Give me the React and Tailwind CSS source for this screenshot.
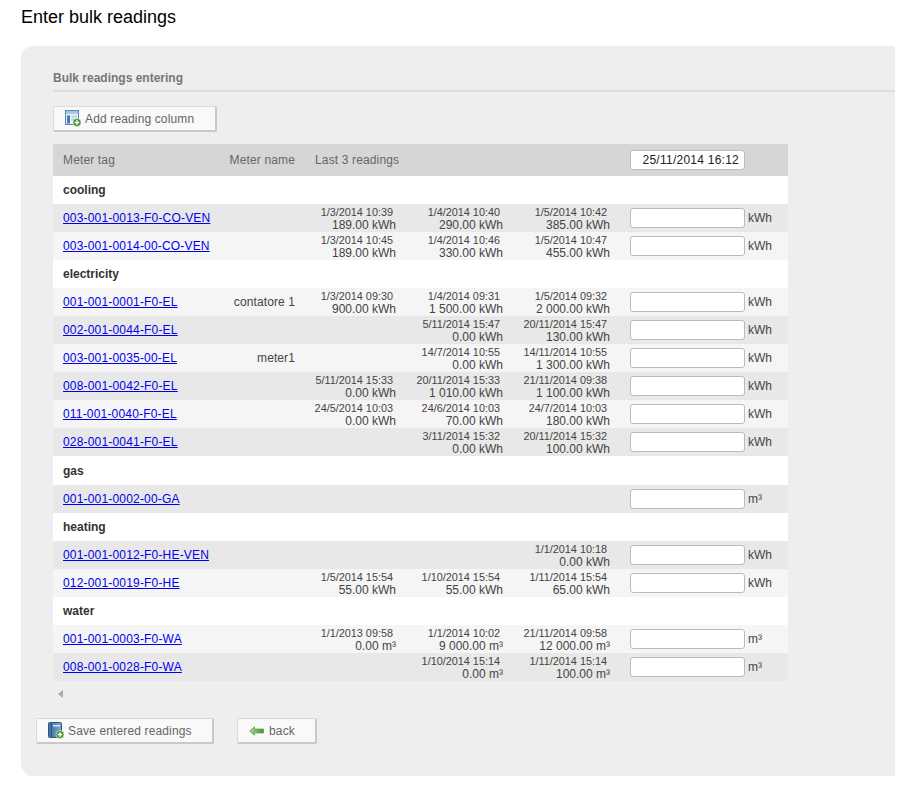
const groups = [
  {
    name: "cooling",
    rows: [
      { tag: "003-001-0013-F0-CO-VEN", unit: "kWh", readings: [["1/3/2014 10:39", "189.00 kWh"], ["1/4/2014 10:40", "290.00 kWh"], ["1/5/2014 10:42", "385.00 kWh"]] },
      { tag: "003-001-0014-00-CO-VEN", unit: "kWh", readings: [["1/3/2014 10:45", "189.00 kWh"], ["1/4/2014 10:46", "330.00 kWh"], ["1/5/2014 10:47", "455.00 kWh"]] },
    ],
  },
  {
    name: "electricity",
    rows: [
      { tag: "001-001-0001-F0-EL", meter: "contatore 1", unit: "kWh", readings: [["1/3/2014 09:30", "900.00 kWh"], ["1/4/2014 09:31", "1 500.00 kWh"], ["1/5/2014 09:32", "2 000.00 kWh"]] },
      { tag: "002-001-0044-F0-EL", unit: "kWh", readings: [null, ["5/11/2014 15:47", "0.00 kWh"], ["20/11/2014 15:47", "130.00 kWh"]] },
      { tag: "003-001-0035-00-EL", meter: "meter1", unit: "kWh", readings: [null, ["14/7/2014 10:55", "0.00 kWh"], ["14/11/2014 10:55", "1 300.00 kWh"]] },
      { tag: "008-001-0042-F0-EL", unit: "kWh", readings: [["5/11/2014 15:33", "0.00 kWh"], ["20/11/2014 15:33", "1 010.00 kWh"], ["21/11/2014 09:38", "1 100.00 kWh"]] },
      { tag: "011-001-0040-F0-EL", unit: "kWh", readings: [["24/5/2014 10:03", "0.00 kWh"], ["24/6/2014 10:03", "70.00 kWh"], ["24/7/2014 10:03", "180.00 kWh"]] },
      { tag: "028-001-0041-F0-EL", unit: "kWh", readings: [null, ["3/11/2014 15:32", "0.00 kWh"], ["20/11/2014 15:32", "100.00 kWh"]] },
    ],
  },
  {
    name: "gas",
    tall: true,
    rows: [{ tag: "001-001-0002-00-GA", unit: "m³", readings: [null, null, null] }],
  },
  {
    name: "heating",
    rows: [
      { tag: "001-001-0012-F0-HE-VEN", unit: "kWh", readings: [null, null, ["1/1/2014 10:18", "0.00 kWh"]] },
      { tag: "012-001-0019-F0-HE", unit: "kWh", readings: [["1/5/2014 15:54", "55.00 kWh"], ["1/10/2014 15:54", "55.00 kWh"], ["1/11/2014 15:54", "65.00 kWh"]] },
    ],
  },
  {
    name: "water",
    rows: [
      { tag: "001-001-0003-F0-WA", unit: "m³", readings: [["1/1/2013 09:58", "0.00 m³"], ["1/1/2014 10:02", "9 000.00 m³"], ["21/11/2014 09:58", "12 000.00 m³"]] },
      { tag: "008-001-0028-F0-WA", unit: "m³", readings: [null, ["1/10/2014 15:14", "0.00 m³"], ["1/11/2014 15:14", "100.00 m³"]] },
    ],
  },
];

// row shading runs on through the whole table, so the first row of a group can be light
const shades = {
  "003-001-0013-F0-CO-VEN": "bg-[#e8e8e8]",
  "003-001-0014-00-CO-VEN": "bg-[#f5f5f5]",
  "001-001-0001-F0-EL": "bg-[#f5f5f5]",
  "002-001-0044-F0-EL": "bg-[#e8e8e8]",
  "003-001-0035-00-EL": "bg-[#f5f5f5]",
  "008-001-0042-F0-EL": "bg-[#e8e8e8]",
  "011-001-0040-F0-EL": "bg-[#f5f5f5]",
  "028-001-0041-F0-EL": "bg-[#e8e8e8]",
  "001-001-0002-00-GA": "bg-[#e8e8e8]",
  "001-001-0012-F0-HE-VEN": "bg-[#e8e8e8]",
  "012-001-0019-F0-HE": "bg-[#f5f5f5]",
  "001-001-0003-F0-WA": "bg-[#f5f5f5]",
  "008-001-0028-F0-WA": "bg-[#e8e8e8]",
};

function PlusBadge() {
  return (
    <>
      <circle cx="12" cy="12.5" r="4" fill="#3f8f2c" stroke="#dcebd2" strokeWidth="0.7" />
      <path d="M9.7 12.5h4.6M12 10.2v4.6" stroke="#fff" strokeWidth="1.5" />
    </>
  );
}

function TableIcon() {
  return (
    <svg width="16" height="17" viewBox="0 0 16 17" className="shrink-0">
      <rect x="0.5" y="0.5" width="13" height="14" fill="#eaf2fa" stroke="#5a87bb" />
      <rect x="1" y="1" width="12" height="3" fill="#a9c6e4" />
      <rect x="2" y="5.5" width="3" height="8" fill="#4a77ad" />
      <rect x="6.5" y="5.5" width="5.5" height="2" fill="#bcd2e8" />
      <rect x="6.5" y="8.5" width="3" height="2" fill="#bcd2e8" />
      <PlusBadge />
    </svg>
  );
}

function BookIcon() {
  return (
    <svg width="16" height="17" viewBox="0 0 16 17" className="shrink-0">
      <defs>
        <linearGradient id="bookFill" x1="0" y1="0" x2="1" y2="0">
          <stop offset="0" stopColor="#3d6da3" />
          <stop offset="1" stopColor="#7ba6d0" />
        </linearGradient>
      </defs>
      <rect x="0.5" y="0.5" width="13" height="15" rx="1" fill="url(#bookFill)" stroke="#2f5685" />
      <rect x="3" y="1" width="1" height="14" fill="#2f5685" />
      <rect x="5" y="3" width="7" height="1.5" fill="#d8e6f3" />
      <PlusBadge />
    </svg>
  );
}

function BackIcon() {
  return (
    <svg width="15" height="10" viewBox="0 0 15 10" className="mr-px shrink-0">
      <defs>
        <linearGradient id="backFill" x1="0" y1="0" x2="1" y2="0">
          <stop offset="0" stopColor="#a6d896" />
          <stop offset="1" stopColor="#4c8f3c" />
        </linearGradient>
      </defs>
      <path d="M0.5 5 L5.5 0.8 V3 H14.5 V7 H5.5 V9.2 Z" fill="url(#backFill)" stroke="#5c9c4c" strokeWidth="0.7" />
    </svg>
  );
}

function Button({ icon, label, className }) {
  return (
    <button
      type="button"
      className={`flex h-[26px] items-center gap-[4px] rounded-[2px] border border-[#dadada] border-r-2 border-b-2 border-r-[#c8c8c8] border-b-[#c8c8c8] bg-[#f9f9f9] text-left text-[12px] tracking-[0.14px] text-[#666] ${className}`}
    >
      {icon}
      {label}
    </button>
  );
}

function Reading({ reading }) {
  if (!reading) return <td className="p-0" />;
  return (
    <td className="p-0 pr-[10px] pt-px text-right align-middle text-[#444]">
      <div className="pr-[3px] text-[10.85px] leading-[14px]">{reading[0]}</div>
      <div className="text-[12px] leading-[13px]">{reading[1]}</div>
    </td>
  );
}

function MeterRow({ row }) {
  return (
    <tr className={`h-[28px] ${shades[row.tag]}`}>
      <td className="p-0 pl-[10px] align-middle text-[12px] tracking-[0.18px]">
        <a href="#" className="text-[#0000ee] underline">{row.tag}</a>
      </td>
      <td className="p-0 pr-[10px] text-right align-middle text-[12px] tracking-[0.1px] text-[#444]">{row.meter}</td>
      {row.readings.map((reading, i) => (
        <Reading key={i} reading={reading} />
      ))}
      <td className="p-0 pl-[10px] align-middle">
        <div className="flex items-center gap-[3px] text-[12px] text-[#444]">
          <input className="h-[20px] w-[115px] rounded-[3px] border border-[#bbb] bg-white" />
          {row.unit}
        </div>
      </td>
    </tr>
  );
}

export default function App() {
  return (
    <div className="min-h-[808px] bg-white font-['Liberation_Sans',Arial,sans-serif]">
      <h1 className="pl-[21px] pt-[7px] text-[18px] font-normal leading-[21px] text-black">Enter bulk readings</h1>
      <div className="ml-[21px] mt-[18px] h-[730px] w-[874px] rounded-l-[12px] bg-[#eeeeee] pl-[32px] pt-[25px]">
        <h2 className="border-b-2 border-[#dddddd] pb-[5px] text-[12px] font-bold leading-[14px] text-[#777]">
          Bulk readings entering
        </h2>
        <Button icon={<TableIcon />} label="Add reading column" className="mt-[14px] w-[164px] pl-[11px]" />
        <table className="mt-[12px] w-[735px] table-fixed border-collapse">
          <colgroup>
            <col className="w-[167px]" />
            <col className="w-[85px]" />
            <col className="w-[101px]" />
            <col className="w-[107px]" />
            <col className="w-[107px]" />
            <col />
          </colgroup>
          <thead>
            <tr className="h-[32px] bg-[#d6d6d6] text-[12px] font-normal tracking-[0.14px] text-[#666]">
              <th className="p-0 pl-[10px] text-left font-normal">Meter tag</th>
              <th className="p-0 pr-[10px] text-right font-normal">Meter name</th>
              <th colSpan="3" className="p-0 pl-[10px] text-left font-normal">Last 3 readings</th>
              <th className="p-0 pl-[10px] text-left font-normal">
                <input
                  readOnly
                  value="25/11/2014 16:12"
                  className="h-[20px] w-[115px] rounded-[3px] border border-[#bbb] bg-white pr-[5px] text-right text-[12px] tracking-[0.25px] text-[#222]"
                />
              </th>
            </tr>
          </thead>
          <tbody>
            {groups.map((group) => [
              <tr key={group.name} className={`bg-white ${group.tall ? "h-[29px]" : "h-[28px]"}`}>
                <td colSpan="6" className="p-0 pl-[10px] align-middle text-[12px] font-bold text-[#333]">{group.name}</td>
              </tr>,
              ...group.rows.map((row) => <MeterRow key={row.tag} row={row} />),
            ])}
          </tbody>
        </table>
        <div className="flex h-[26px] items-center pl-[5px]">
          <div className="h-0 w-0 border-y-[4px] border-r-[5px] border-y-transparent border-r-[#aaa]" />
        </div>
        <div className="mt-[11px] -ml-[17px] flex gap-[23px]">
          <Button icon={<BookIcon />} label="Save entered readings" className="w-[178px] pl-[11px]" />
          <Button icon={<BackIcon />} label="back" className="w-[80px] pl-[11px]" />
        </div>
      </div>
    </div>
  );
}
